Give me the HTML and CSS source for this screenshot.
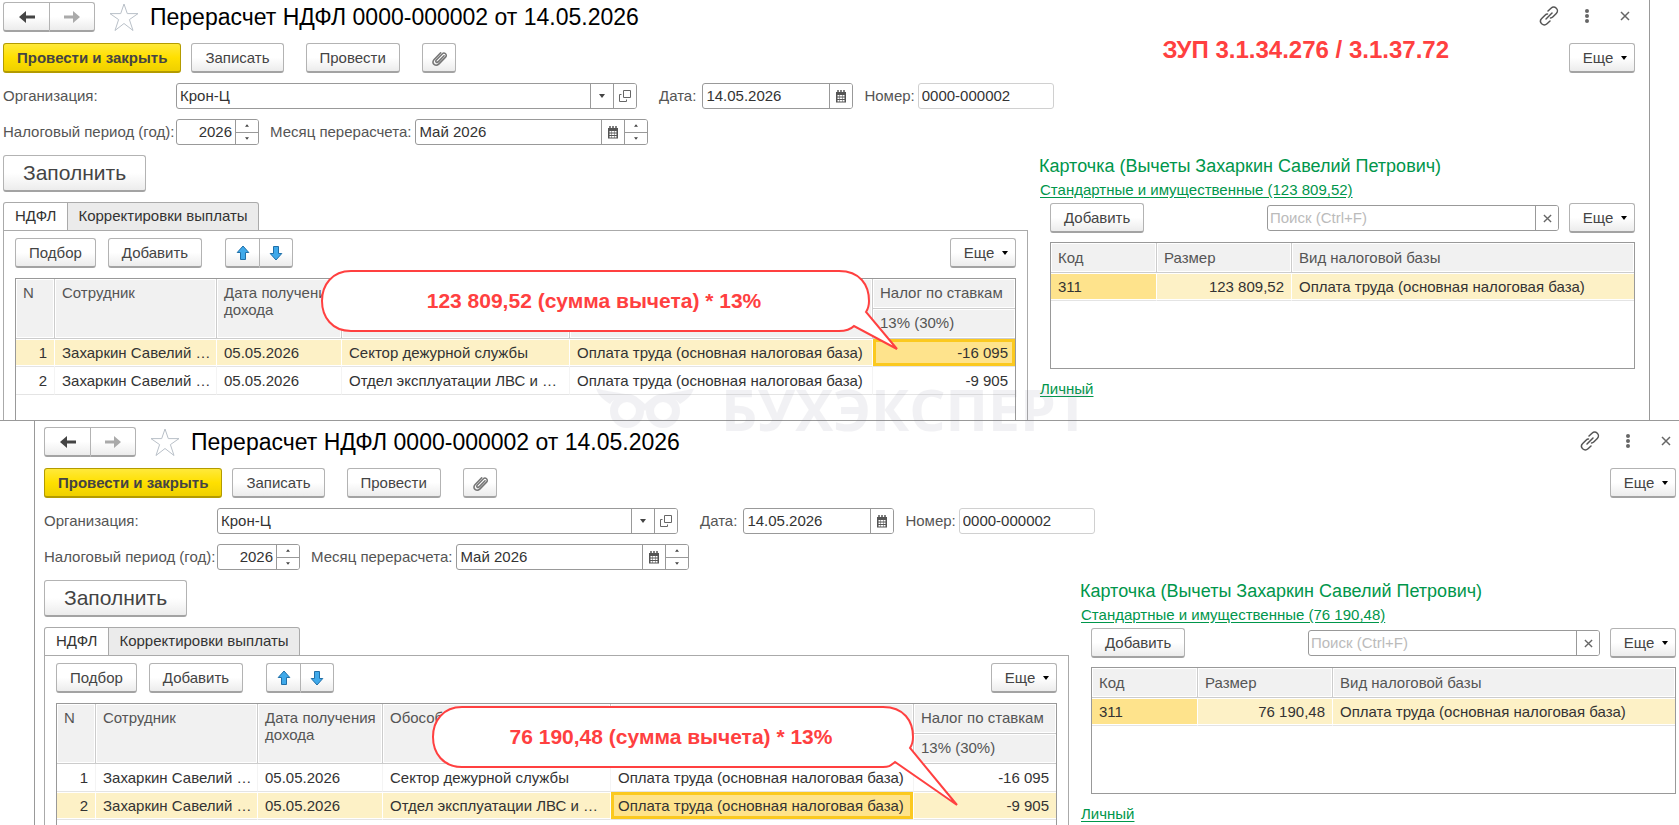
FILE: index.html
```
<!DOCTYPE html>
<html lang="ru">
	<head>
		<meta charset="utf-8">
		<title>Перерасчет НДФЛ</title>
		<link rel="stylesheet" href="styles.css">
	</head>
	<body>
		<svg width="0" height="0" class="sprite" aria-hidden="true">
			<symbol id="back" viewBox="0 0 18 14"><path d="M1 7L8 1v4.500H17v3H8V13z"/></symbol>
			<symbol id="star" viewBox="0 0 30 28"><path d="M15 1L18.300 10.600H29L20.400 16.600L24 27.500L15 20.500L6 27.500L9.600 16.600L1 10.600H11.700z" fill="#fff" stroke="#b9c0c8"/></symbol>
			<symbol id="link" viewBox="0 0 20 20"><g fill="none" stroke="#555" stroke-width="1.500" stroke-linecap="round"><path d="M9 5L12 2.200C13.500 .8 15.800 .8 17.300 2.200C18.800 3.700 18.800 6 17.300 7.500L14 10.800C13 11.800 12 12 11.500 12"/><path d="M11 15L8 17.800C6.500 19.200 4.200 19.200 2.700 17.800C1.200 16.300 1.200 14 2.700 12.500L6 9.200C7 8.200 8 8 8.500 8"/><path d="M7 13L13 7"/></g></symbol>
			<symbol id="dots" viewBox="0 0 6 16"><circle cx="3" cy="3" r="2"/><circle cx="3" cy="8" r="2"/><circle cx="3" cy="13" r="2"/></symbol>
			<symbol id="cross" viewBox="0 0 10 10"><path d="M1 1L9 9M9 1L1 9" stroke="#666" stroke-width="1.500"/></symbol>
			<symbol id="clip" viewBox="0 0 16 16"><path d="M12.500 6L7.500 11.200C6 12.700 4.300 11.200 5.600 9.800L10.800 4.400C12.800 2.400 15.800 5 13.800 7.200L8 13.200C5 16.200 .8 12.700 3.500 9.600L9.500 3.300" fill="none" stroke="#777" stroke-width="1.400" stroke-linecap="round"/></symbol>
			<symbol id="cal" viewBox="0 0 12 13"><path d="M1 2h10v10.500H1z" fill="#555"/><path d="M3 0v2M6 0v2M9 0v2" stroke="#555" stroke-width="1.500"/><path d="M2.500 5h2v1.500h-2zM5 5h2v1.500H5zM7.500 5h2v1.500h-2zM2.500 7.500h2V9h-2zM5 7.500h2V9H5zM7.500 7.500h2V9h-2zM2.500 10h2v1.500h-2zM5 10h2v1.500H5zM7.500 10h2v1.500h-2z" fill="#fff"/></symbol>
			<symbol id="open" viewBox="0 0 12 12"><path d="M4.500 .5h7v7h-7zM2.500 4.500h-2v7h7v-2" fill="none" stroke="#666"/></symbol>
			<symbol id="down" viewBox="0 0 6 4"><path d="M0 0h6L3 4z"/></symbol>
			<symbol id="up" viewBox="0 0 6 4"><path d="M0 4h6L3 0z"/></symbol>
			<symbol id="arrow" viewBox="0 0 14 16"><path d="M7 1L12.800 7.500H9.500V14.500H4.500V7.500H1.200z" fill="#3fa9ea" stroke="#1f6fa8"/></symbol>
		</svg>

		<div class="window first">
			<div class="titleBar">
				<div class="group nav">
					<button class="btn" aria-label="Назад"><svg width="18" height="14" fill="#444"><use href="#back"/></svg></button>
					<button class="btn" aria-label="Вперед"><svg class="flipX" width="18" height="14" fill="#aaa"><use href="#back"/></svg></button>
				</div>
				<svg class="star" width="30" height="28"><use href="#star"/></svg>
				<h1>Перерасчет НДФЛ 0000-000002 от 14.05.2026</h1>
				<div class="winIcons">
					<svg width="20" height="20"><use href="#link"/></svg>
					<svg class="dots" width="6" height="16"><use href="#dots"/></svg>
					<svg width="10" height="10"><use href="#cross"/></svg>
				</div>
			</div>
			<div class="commands">
				<button class="btn main">Провести и закрыть</button>
				<button class="btn">Записать</button>
				<button class="btn apart">Провести</button>
				<button class="btn apart clip" aria-label="Файлы"><svg width="18" height="18"><use href="#clip"/></svg></button>
				<span class="version">ЗУП 3.1.34.276 / 3.1.37.72</span>
				<button class="btn more">Еще <svg width="6" height="4"><use href="#down"/></svg></button>
			</div>
			<div class="fields">
				<label class="lead" for="org1">Организация:</label>
				<div class="box org"><input id="org1" value="Крон-Ц"><button aria-label="Выбрать"><svg width="6" height="4"><use href="#down"/></svg></button><button aria-label="Открыть"><svg width="12" height="12"><use href="#open"/></svg></button></div>
				<label class="date" for="date1">Дата:</label>
				<div class="box day"><input id="date1" value="14.05.2026"><button aria-label="Календарь"><svg width="12" height="13"><use href="#cal"/></svg></button></div>
				<label for="num1">Номер:</label>
				<div class="box num"><input id="num1" value="0000-000002"></div>
			</div>
			<div class="fields">
				<label class="lead" for="year1">Налоговый период (год):</label>
				<div class="box year"><input id="year1" value="2026"><span class="spin"><button aria-label="Больше"><svg width="4" height="3"><use href="#up"/></svg></button><button aria-label="Меньше"><svg width="4" height="3"><use href="#down"/></svg></button></span></div>
				<label for="month1">Месяц перерасчета:</label>
				<div class="box month"><input id="month1" value="Май 2026"><button aria-label="Календарь"><svg width="12" height="13"><use href="#cal"/></svg></button><span class="spin"><button aria-label="Больше"><svg width="4" height="3"><use href="#up"/></svg></button><button aria-label="Меньше"><svg width="4" height="3"><use href="#down"/></svg></button></span></div>
			</div>
			<div class="panes">
				<div class="left">
					<button class="btn fill">Заполнить</button>
					<div class="tabs"><button class="tab active">НДФЛ</button><button class="tab">Корректировки выплаты</button></div>
					<div class="sheet">
						<div class="tools">
							<button class="btn">Подбор</button>
							<button class="btn">Добавить</button>
							<div class="group move">
								<button class="btn" aria-label="Вверх"><svg width="14" height="16"><use href="#arrow"/></svg></button>
								<button class="btn" aria-label="Вниз"><svg class="flipY" width="14" height="16"><use href="#arrow"/></svg></button>
							</div>
							<button class="btn more">Еще <svg width="6" height="4"><use href="#down"/></svg></button>
						</div>
						<div class="grid">
							<table class="tax">
								<colgroup><col class="cN"><col class="cName"><col class="cDate"><col class="cDept"><col class="cBase"><col class="cTax"></colgroup>
								<thead>
									<tr><th rowspan="2">N</th><th rowspan="2">Сотрудник</th><th rowspan="2">Дата получения дохода</th><th rowspan="2"></th><th rowspan="2"></th><th>Налог по ставкам</th></tr>
									<tr><th>13% (30%)</th></tr>
								</thead>
								<tbody>
									<tr class="selected"><td class="right">1</td><td>Захаркин Савелий …</td><td>05.05.2026</td><td>Сектор дежурной службы</td><td>Оплата труда (основная налоговая база)</td><td class="right current">-16 095</td></tr>
									<tr><td class="right">2</td><td>Захаркин Савелий …</td><td>05.05.2026</td><td>Отдел эксплуатации ЛВС и …</td><td>Оплата труда (основная налоговая база)</td><td class="right">-9 905</td></tr>
								</tbody>
							</table>
						</div>
					</div>
				</div>
				<div class="card">
					<h2>Карточка (Вычеты Захаркин Савелий Петрович)</h2>
					<a href="#">Стандартные и имущественные (123 809,52)</a>
					<div class="cardTools">
						<button class="btn">Добавить</button>
						<div class="box search"><input placeholder="Поиск (Ctrl+F)" aria-label="Поиск"><button aria-label="Очистить"><svg width="9" height="9"><use href="#cross"/></svg></button></div>
						<button class="btn more">Еще <svg width="6" height="4"><use href="#down"/></svg></button>
					</div>
					<div class="grid codes">
						<table>
							<colgroup><col class="cCode"><col class="cSum"><col></colgroup>
							<thead><tr><th>Код</th><th>Размер</th><th>Вид налоговой базы</th></tr></thead>
							<tbody><tr class="selected"><td class="mark">311</td><td class="right">123 809,52</td><td>Оплата труда (основная налоговая база)</td></tr></tbody>
						</table>
					</div>
					<a href="#">Личный</a>
				</div>
			</div>
			<div class="callout one">
				<svg width="580" height="84"><path d="M31 2H519C540 2 549 16 549 32C549 36 548 40 546 43L577 80L534 57C530 61 525 62 519 62H31C12 62 2 48 2 32S12 2 31 2z"/></svg>
				<p>123 809,52 (сумма вычета) * 13%</p>
			</div>
		</div>

		<div class="window second">
			<div class="titleBar">
				<div class="group nav">
					<button class="btn" aria-label="Назад"><svg width="18" height="14" fill="#444"><use href="#back"/></svg></button>
					<button class="btn" aria-label="Вперед"><svg class="flipX" width="18" height="14" fill="#aaa"><use href="#back"/></svg></button>
				</div>
				<svg class="star" width="30" height="28"><use href="#star"/></svg>
				<h1>Перерасчет НДФЛ 0000-000002 от 14.05.2026</h1>
				<div class="winIcons">
					<svg width="20" height="20"><use href="#link"/></svg>
					<svg class="dots" width="6" height="16"><use href="#dots"/></svg>
					<svg width="10" height="10"><use href="#cross"/></svg>
				</div>
			</div>
			<div class="commands">
				<button class="btn main">Провести и закрыть</button>
				<button class="btn">Записать</button>
				<button class="btn apart">Провести</button>
				<button class="btn apart clip" aria-label="Файлы"><svg width="18" height="18"><use href="#clip"/></svg></button>
				<button class="btn more">Еще <svg width="6" height="4"><use href="#down"/></svg></button>
			</div>
			<div class="fields">
				<label class="lead" for="org2">Организация:</label>
				<div class="box org"><input id="org2" value="Крон-Ц"><button aria-label="Выбрать"><svg width="6" height="4"><use href="#down"/></svg></button><button aria-label="Открыть"><svg width="12" height="12"><use href="#open"/></svg></button></div>
				<label class="date" for="date2">Дата:</label>
				<div class="box day"><input id="date2" value="14.05.2026"><button aria-label="Календарь"><svg width="12" height="13"><use href="#cal"/></svg></button></div>
				<label for="num2">Номер:</label>
				<div class="box num"><input id="num2" value="0000-000002"></div>
			</div>
			<div class="fields">
				<label class="lead" for="year2">Налоговый период (год):</label>
				<div class="box year"><input id="year2" value="2026"><span class="spin"><button aria-label="Больше"><svg width="4" height="3"><use href="#up"/></svg></button><button aria-label="Меньше"><svg width="4" height="3"><use href="#down"/></svg></button></span></div>
				<label for="month2">Месяц перерасчета:</label>
				<div class="box month"><input id="month2" value="Май 2026"><button aria-label="Календарь"><svg width="12" height="13"><use href="#cal"/></svg></button><span class="spin"><button aria-label="Больше"><svg width="4" height="3"><use href="#up"/></svg></button><button aria-label="Меньше"><svg width="4" height="3"><use href="#down"/></svg></button></span></div>
			</div>
			<div class="panes">
				<div class="left">
					<button class="btn fill">Заполнить</button>
					<div class="tabs"><button class="tab active">НДФЛ</button><button class="tab">Корректировки выплаты</button></div>
					<div class="sheet">
						<div class="tools">
							<button class="btn">Подбор</button>
							<button class="btn">Добавить</button>
							<div class="group move">
								<button class="btn" aria-label="Вверх"><svg width="14" height="16"><use href="#arrow"/></svg></button>
								<button class="btn" aria-label="Вниз"><svg class="flipY" width="14" height="16"><use href="#arrow"/></svg></button>
							</div>
							<button class="btn more">Еще <svg width="6" height="4"><use href="#down"/></svg></button>
						</div>
						<div class="grid">
							<table class="tax">
								<colgroup><col class="cN"><col class="cName"><col class="cDate"><col class="cDept"><col class="cBase"><col class="cTax"></colgroup>
								<thead>
									<tr><th rowspan="2">N</th><th rowspan="2">Сотрудник</th><th rowspan="2">Дата получения дохода</th><th rowspan="2">Обособ</th><th rowspan="2"></th><th>Налог по ставкам</th></tr>
									<tr><th>13% (30%)</th></tr>
								</thead>
								<tbody>
									<tr><td class="right">1</td><td>Захаркин Савелий …</td><td>05.05.2026</td><td>Сектор дежурной службы</td><td>Оплата труда (основная налоговая база)</td><td class="right">-16 095</td></tr>
									<tr class="selected"><td class="right">2</td><td>Захаркин Савелий …</td><td>05.05.2026</td><td>Отдел эксплуатации ЛВС и …</td><td class="current">Оплата труда (основная налоговая база)</td><td class="right">-9 905</td></tr>
								</tbody>
							</table>
						</div>
					</div>
				</div>
				<div class="card">
					<h2>Карточка (Вычеты Захаркин Савелий Петрович)</h2>
					<a href="#">Стандартные и имущественные (76 190,48)</a>
					<div class="cardTools">
						<button class="btn">Добавить</button>
						<div class="box search"><input placeholder="Поиск (Ctrl+F)" aria-label="Поиск"><button aria-label="Очистить"><svg width="9" height="9"><use href="#cross"/></svg></button></div>
						<button class="btn more">Еще <svg width="6" height="4"><use href="#down"/></svg></button>
					</div>
					<div class="grid codes">
						<table>
							<colgroup><col class="cCode"><col class="cSum"><col></colgroup>
							<thead><tr><th>Код</th><th>Размер</th><th>Вид налоговой базы</th></tr></thead>
							<tbody><tr class="selected"><td class="mark">311</td><td class="right">76 190,48</td><td>Оплата труда (основная налоговая база)</td></tr></tbody>
						</table>
					</div>
					<a href="#">Личный</a>
				</div>
			</div>
			<div class="callout two">
				<svg width="530" height="104"><path d="M31 2H452C473 2 482 16 482 32C482 36 481 40 479 43L526 100L464 57C459 61 458 62 452 62H31C12 62 2 48 2 32S12 2 31 2z"/></svg>
				<p>76 190,48 (сумма вычета) * 13%</p>
			</div>
		</div>

		<div class="watermark">
			<svg width="98" height="44" viewBox="0 0 98 44"><g fill="none" stroke="#74748c" stroke-width="8"><circle cx="31" cy="24" r="13"/><circle cx="67" cy="24" r="13"/></g><path d="M0 1C16 7 37 4 49 17C61 4 82 7 98 1C96 9 90 13 84 17C78 9 62 8 49 24C36 8 20 9 14 17C8 13 2 9 0 1z" fill="#74748c"/></svg>
			<span>БУХЭКСПЕРТ</span>
		</div>
	</body>
</html>
```
FILE: styles.css
```
*{ box-sizing: border-box; }
body{ margin: 0; height: 100vh; overflow: hidden; display: flex; flex-direction: column; position: relative; background: #fff; color: #333; font-family: "Liberation Sans", Arial, sans-serif; font-size: 15px; line-height: 18px; }
button, input{ font: inherit; color: inherit; margin: 0; }
svg{ display: block; flex: none; }
.sprite{ position: absolute; }
.flipX{ transform: scaleX(-1); }
.flipY{ transform: scaleY(-1); }

.window{ position: relative; display: flex; flex-direction: column; }
.first{ margin-right: 29px; padding: 2px 14px 0 3px; height: 420px; flex: none; border-right: 1px solid #999; }
.second{ flex: 1; margin-left: 34px; padding: 7px 3px 0 9px; min-height: 0; border-left: 1px solid #999; }
.second::before{ content: ""; position: absolute; left: -35px; right: 0; top: 0; border-top: 1px solid #999; }

.btn{ height: 30px; padding: 0 13px; border: 1px solid #b3b3b3; border-bottom: 2px solid #a3a3a3; border-radius: 3px; background: linear-gradient(#fff 50%, #ececec); color: #444; display: flex; align-items: center; justify-content: center; white-space: nowrap; }
.main{ background: linear-gradient(#ffe93a, #ffe000 50%, #efd000); border-color: #b39b00; font-weight: bold; }
.more{ width: 66px; gap: 8px; margin-left: auto; padding: 0 0 0 6px; }
.group{ display: flex; }
.group .btn{ padding: 0; }
.group .btn:first-child{ border-radius: 3px 0 0 3px; border-right: 0; }
.group .btn:last-child{ border-radius: 0 3px 3px 0; }
.nav .btn{ width: 46px; }
.move .btn{ width: 34px; }

.titleBar{ display: flex; height: 30px; align-items: center; }
.star{ margin: 0 11px 0 14px; }
h1{ margin: 0; color: #000; font-size: 23px; font-weight: normal; line-height: 28px; }
.winIcons{ display: flex; align-items: center; gap: 25px; margin: 0 5px 2px auto; }
.dots{ margin-right: 5px; fill: #666; }
.commands{ display: flex; gap: 10px; margin-top: 11px; }
.apart{ margin-left: 12px; }
.clip{ width: 34px; padding: 0; }
.version{ margin: -6px 0 0 auto; padding-right: 110px; color: #ff4040; font-size: 24px; font-weight: bold; line-height: 26px; }
.version + .more{ margin-left: 0; }

.fields{ display: flex; align-items: center; margin-top: 10px; color: #555; }
.fields .lead{ width: 173px; }
.box{ display: flex; height: 26px; border: 1px solid #999; border-radius: 3px; background: #fff; color: #333; overflow: hidden; }
.box input{ flex: 1; width: 0; min-width: 0; border: 0; padding: 0 3px; outline: 0; background: none; }
.box button{ width: 23px; padding: 0; border: 0; border-left: 1px solid #999; background: #fff; display: flex; align-items: center; justify-content: center; fill: #444; }
.spin{ display: flex; flex-direction: column; width: 23px; }
.spin button{ flex: 1; }
.spin button + button{ border-top: 1px solid #999; }
.org{ width: 461px; }
.day{ width: 151px; margin: 0 11px 0 6px; }
.date{ margin-left: 22px; }
.num{ width: 136px; margin-left: 3px; border-color: #d0d0d0; }
.year{ width: 83px; margin-right: 11px; }
.year input{ text-align: right; }
.month{ width: 233px; margin-left: 4px; }

.panes{ display: flex; flex: 1; gap: 11px; min-height: 0; }
.left{ flex: 1; display: flex; flex-direction: column; min-width: 0; }
.fill{ align-self: flex-start; flex: none; height: 37px; margin-top: 10px; padding: 0 19px; font-size: 21px; }
.tabs{ display: flex; margin: 10px 0 -1px; }
.tab{ height: 29px; padding: 0 10px 2px; border: 1px solid #aaa; background: #ebebeb; border-radius: 0 3px 0 0; color: #333; }
.tab + .tab{ border-left: 0; }
.active{ padding: 0 11px 2px; background: #fff; border-bottom-color: #fff; border-radius: 3px 0 0 0; }
.sheet{ flex: 1; display: flex; flex-direction: column; min-height: 0; padding: 7px 11px 0; border: 1px solid #aaa; border-bottom: 0; }
.tools{ display: flex; gap: 12px; margin-bottom: 10px; }
.move{ margin-left: 11px; }

.grid{ flex: 1; border: 1px solid #999; border-bottom: 0; min-height: 0; }
table{ width: 100%; border-collapse: separate; border-spacing: 0; table-layout: fixed; }
th, td{ text-align: left; font-weight: normal; padding: 0 7px; white-space: nowrap; overflow: hidden; background-clip: padding-box; }
th{ height: 30px; background-color: #f1f1f1; color: #555; border-right: 1px solid #ccc; border-bottom: 1px solid #ccc; box-shadow: inset 0 0 0 1px #fff; }
.tax th{ vertical-align: top; white-space: normal; padding: 5px 0 0 7px; line-height: 17px; }
td{ height: 28px; border-right: 1px solid #f4f4f4; border-bottom: 1px solid #e4e4e4; box-shadow: inset 0 1px #fff, inset 0 -1px #fff; }
th:last-child, td:last-child{ border-right: 0; }
.right{ text-align: right; }
.selected td{ background-color: #fdf1c6; border-right-color: #fff; }
.selected .current{ background-color: #fee38c; box-shadow: inset 0 0 0 3px #fbc91f; }
.selected .mark{ background-color: #fee38c; }
.cN{ width: 39px; }
.cName{ width: 162px; }
.cDate{ width: 125px; }
.cDept{ width: 228px; }
.cBase{ width: 303px; }

.card{ width: 596px; display: flex; flex-direction: column; align-items: flex-start; }
h2{ margin: 10px 0 4px; color: #00964b; font-size: 18px; font-weight: normal; line-height: 22px; }
.card a{ color: #00964b; margin-left: 1px; text-underline-offset: 2px; }
.cardTools{ display: flex; align-items: center; align-self: stretch; gap: 10px; margin: 4px 0 9px 11px; }
.search{ width: 292px; margin-left: auto; }
.search input{ padding: 0 2px; }
.search input::placeholder{ color: #bbb; }
.cardTools .more{ margin-left: 0; }
.codes{ flex: none; align-self: stretch; height: 127px; margin: 0 0 11px 11px; border: 1px solid #999; }
.cCode{ width: 106px; }
.cSum{ width: 135px; }

/* red speech bubbles over the tables */
.callout{ position: absolute; z-index: 2; }
.callout path{ fill: #fff; stroke: #ff4040; stroke-width: 2; }
.callout p{ position: absolute; top: 0; left: 0; margin: 0; text-align: center; color: #ff4040; font-size: 21px; font-weight: bold; line-height: 64px; }
.one{ left: 320px; top: 269px; }
.one p{ width: 548px; }
.two{ left: 396px; top: 285px; }
.two p{ width: 480px; }

.watermark{ position: absolute; z-index: 3; left: 596px; top: 387px; display: flex; align-items: center; gap: 27px; opacity: .09; color: #74748c; font-family: "Open Sans", sans-serif; font-size: 57px; font-weight: bold; line-height: 44px; pointer-events: none; }
```
